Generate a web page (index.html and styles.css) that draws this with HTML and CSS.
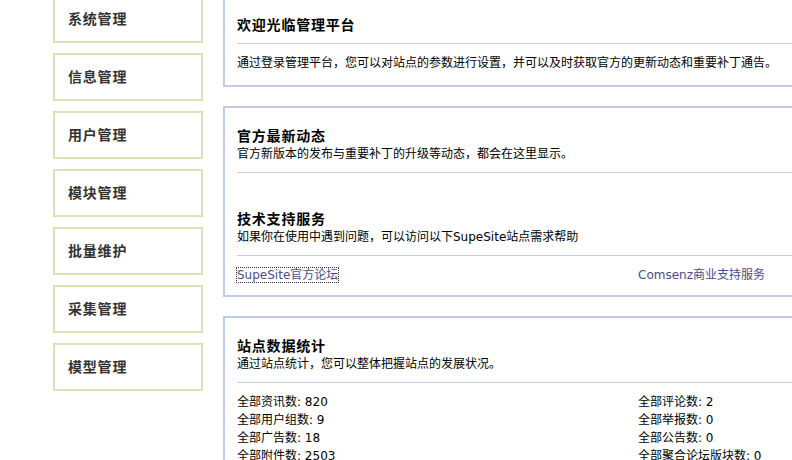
FILE: index.html
```html
<!DOCTYPE html>
<html lang="zh-CN">
<head>
<meta charset="utf-8">
<title>管理平台</title>
<link rel="stylesheet" href="styles.css">
</head>
<body>
<div class="layout">
  <ul class="nav">
    <li class="nav-item">系统管理</li>
    <li class="nav-item">信息管理</li>
    <li class="nav-item">用户管理</li>
    <li class="nav-item">模块管理</li>
    <li class="nav-item">批量维护</li>
    <li class="nav-item">采集管理</li>
    <li class="nav-item">模型管理</li>
  </ul>
  <div class="main">
    <div class="panel">
      <div class="head head-first head-tight">
        <h3 class="title">欢迎光临管理平台</h3>
      </div>
      <div class="body body-welcome">通过登录管理平台，您可以对站点的参数进行设置，并可以及时获取官方的更新动态和重要补丁通告。</div>
    </div>

    <div class="panel">
      <div class="head head-first head-tight">
        <h3 class="title">官方最新动态</h3>
        <p class="sub">官方新版本的发布与重要补丁的升级等动态，都会在这里显示。</p>
      </div>
      <div class="head head-second">
        <h3 class="title">技术支持服务</h3>
        <p class="sub">如果你在使用中遇到问题，可以访问以下SupeSite站点需求帮助</p>
      </div>
      <div class="cols links">
        <div class="col"><a class="link link-focus" href="#">SupeSite官方论坛</a></div>
        <div class="col"><a class="link" href="#">Comsenz商业支持服务</a></div>
      </div>
    </div>

    <div class="panel">
      <div class="head head-first head-tight">
        <h3 class="title">站点数据统计</h3>
        <p class="sub">通过站点统计，您可以整体把握站点的发展状况。</p>
      </div>
      <div class="cols stats">
        <ul class="col">
          <li>全部资讯数: 820</li>
          <li>全部用户组数: 9</li>
          <li>全部广告数: 18</li>
          <li>全部附件数: 2503</li>
        </ul>
        <ul class="col">
          <li>全部评论数: 2</li>
          <li>全部举报数: 0</li>
          <li>全部公告数: 0</li>
          <li>全部聚合论坛版块数: 0</li>
        </ul>
      </div>
    </div>
  </div>
</div>
</body>
</html>
```

FILE: styles.css
```css
html, body {
  margin: 0;
  padding: 0;
  background: #ffffff;
  overflow: hidden;
}

body {
  font-family: "DejaVu Sans", "Noto Sans CJK SC", sans-serif;
  font-size: 12px;
  color: #000000;
  width: 792px;
  height: 460px;
}

.layout {
  display: flex;
  align-items: flex-start;
  gap: 20px;
  margin-top: -5px;
  padding-left: 53px;
}

.nav {
  list-style: none;
  margin: 0;
  padding: 0;
  width: 150px;
  flex: none;
  display: flex;
  flex-direction: column;
  gap: 10px;
}

.nav-item {
  box-sizing: border-box;
  height: 48px;
  border: 2px solid #d9e2b6;
  display: flex;
  align-items: center;
  padding-left: 13px;
  padding-bottom: 3px;
  font-family: "Noto Sans CJK SC", sans-serif;
  font-size: 14px;
  font-weight: bold;
  letter-spacing: 0.8px;
  color: #333333;
}

.main {
  flex: none;
  width: 830px;
  display: flex;
  flex-direction: column;
  gap: 19px;
}

.panel {
  border: 2px solid #c2cae6;
  padding: 0 12px;
}

.head {
  border-bottom: 1px solid #c2cae6;
  padding-bottom: 10px;
}

.head-first {
  padding-top: 17px;
}

.head-tight {
  padding-bottom: 9px;
}

.head-second {
  padding-top: 35px;
  padding-bottom: 9px;
}

.title {
  margin: 0;
  font-family: "Noto Sans CJK SC", sans-serif;
  font-size: 14px;
  font-weight: bold;
  letter-spacing: 0.8px;
  line-height: 20px;
}

.sub {
  margin: 0;
  line-height: 18px;
}

.body-welcome {
  padding: 10px 0 13px;
  line-height: 18px;
}

.cols {
  display: grid;
  grid-template-columns: 1fr 1fr;
}

.links {
  padding: 10px 0 11px;
  line-height: 18px;
}

.link {
  color: #4b4b8b;
  text-decoration: none;
}

.link-focus {
  outline: 1px dotted #333333;
}

.stats {
  padding-top: 10px;
}

.stats .col {
  list-style: none;
  margin: 0;
  padding: 0;
}

.stats li {
  line-height: 18px;
}
```
